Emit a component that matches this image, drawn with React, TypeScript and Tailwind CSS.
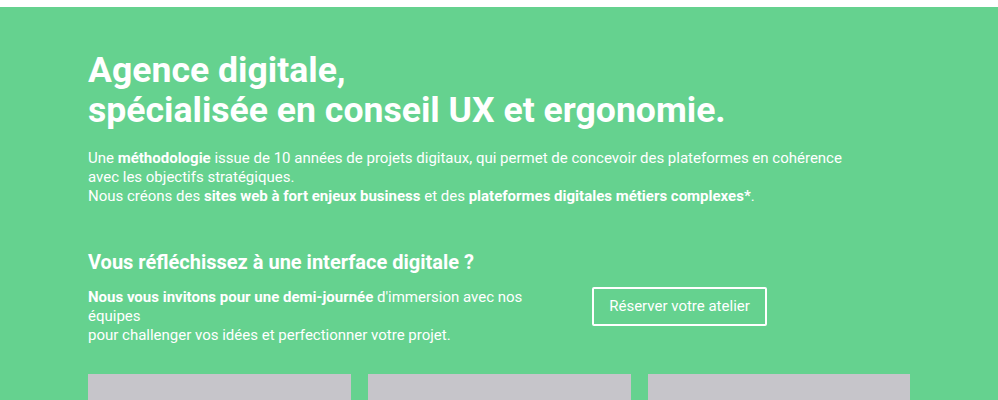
import React from "react";

export default function App() {
  return (
    <div className="w-[998px] h-[400px] overflow-hidden bg-white" style={{ fontFamily: "Roboto, 'Liberation Sans', sans-serif" }}>
      <div className="h-[7px] bg-white" />
      <div className="bg-[#65d28f] text-white h-[393px] pl-[88px] pt-[43px]">
        <h1 className="text-[35.6px] leading-[40px] font-bold m-0">
          Agence digitale,
          <br />
          spécialisée en conseil UX et ergonomie.
        </h1>
        <p className="mt-[19px] w-[770px] text-[15px] leading-[19px]">
          Une <strong className="font-bold">méthodologie</strong> issue de 10 années de projets digitaux, qui permet de concevoir des plateformes en cohérence avec les objectifs stratégiques.
          <br />
          Nous créons des <strong className="font-bold">sites web à fort enjeux business</strong> et des <strong className="font-bold">plateformes digitales métiers complexes*</strong>.
        </p>
        <h2 className="mt-[44px] text-[20px] leading-[24px] font-bold">Vous réfléchissez à une interface digitale ?</h2>
        <div className="mt-[14px] flex items-start">
          <p className="w-[460px] text-[15px] leading-[18.75px]">
            <strong className="font-bold">Nous vous invitons pour une demi-journée</strong> d'immersion avec nos équipes
            <br />
            pour challenger vos idées et perfectionner votre projet.
          </p>
          <button className="ml-[44px] -mt-[1px] h-[39px] w-[175px] border-2 border-white rounded-[2px] text-[15px] leading-[19px] text-white bg-transparent">
            Réserver votre atelier
          </button>
        </div>
        <div className="mt-[30px] flex gap-[17px]">
          <div className="w-[263px] h-[60px] bg-[#c6c5ca]" />
          <div className="w-[263px] h-[60px] bg-[#c6c5ca]" />
          <div className="w-[262px] h-[60px] bg-[#c6c5ca]" />
        </div>
      </div>
    </div>
  );
}
